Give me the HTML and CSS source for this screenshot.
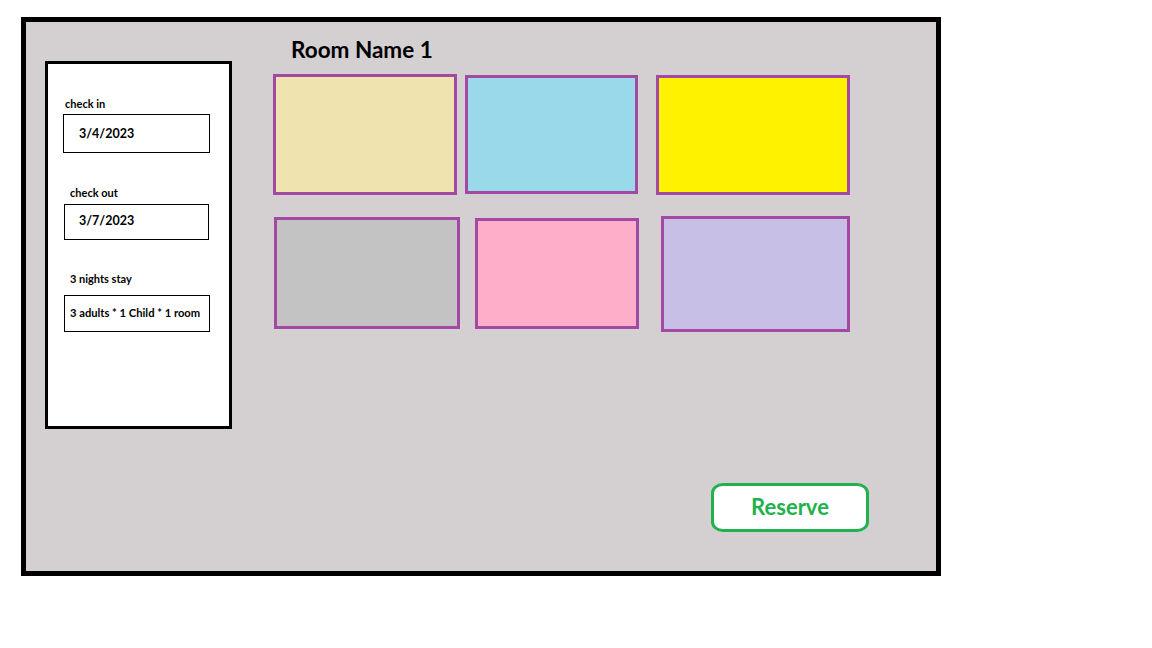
FILE: index.html
```html
<!DOCTYPE html>
<html>
<head>
<meta charset="utf-8">
<link rel="stylesheet" href="styles.css">
</head>
<body>
<div class="frame">
  <aside class="sidebar">
    <div class="label l-in">check in</div>
    <div class="field f-in">3/4/2023</div>
    <div class="label l-out">check out</div>
    <div class="field f-out">3/7/2023</div>
    <div class="label l-stay">3 nights stay</div>
    <div class="field f-guests">3 adults * 1 Child * 1 room</div>
  </aside>
  <main class="main">
    <h1 class="title">Room Name 1</h1>
    <div class="row row1">
      <div class="card c1"></div>
      <div class="card c2"></div>
      <div class="card c3"></div>
    </div>
    <div class="row row2">
      <div class="card c4"></div>
      <div class="card c5"></div>
      <div class="card c6"></div>
    </div>
    <button class="reserve">Reserve</button>
  </main>
</div>
</body>
</html>
```

FILE: styles.css
```css
html, body {
  margin: 0;
  padding: 0;
  background: #ffffff;
}
body {
  padding: 17px 0 0 21px;
  font-family: Lato, "Open Sans", "Liberation Sans", sans-serif;
  color: #000;
}
.frame {
  box-sizing: border-box;
  width: 920px;
  height: 559px;
  border: 5px solid #000;
  background: #d4cfd1;
  display: flex;
  align-items: flex-start;
}
.sidebar {
  box-sizing: border-box;
  width: 187px;
  height: 368px;
  margin: 39px 0 0 19px;
  border: 3px solid #000;
  background: #fff;
  display: flex;
  flex-direction: column;
  align-items: flex-start;
}
.label {
  font-size: 11px;
  line-height: 14px;
  font-weight: 700;
}
.l-in { margin: 33px 0 0 17px; }
.l-out { margin: 33px 0 0 22px; }
.l-stay { margin: 32px 0 0 22px; }
.field {
  box-sizing: border-box;
  border: 1px solid #000;
  display: flex;
  align-items: center;
  font-weight: 700;
  font-size: 12.5px;
}
.f-in { width: 147px; height: 39px; margin: 3px 0 0 15px; padding-left: 15px; }
.f-out { width: 145px; height: 36px; margin: 4px 0 0 16px; padding-left: 14px; padding-bottom: 3px; }
.f-guests { width: 146px; height: 37px; margin: 9px 0 0 16px; padding-left: 5px; font-size: 11.2px; padding-bottom: 2px; }

.main {
  margin: 16px 0 0 41px;
  display: flex;
  flex-direction: column;
  align-items: flex-start;
}
.title {
  margin: 0 0 0 18px;
  font-size: 22.5px;
  line-height: 24px;
  font-weight: 700;
}
.row {
  display: flex;
  align-items: flex-start;
}
.row1 { margin-top: 12px; }
.row2 { margin-top: 21px; }
.card {
  box-sizing: border-box;
  border: 3px solid #a349a4;
}
.c1 { width: 184px; height: 121px; background: #efe4b0; }
.c2 { width: 173px; height: 119px; margin: 1px 0 0 8px; background: #99d9ea; }
.c3 { width: 194px; height: 120px; margin: 1px 0 0 18px; background: #fff200; }
.c4 { width: 186px; height: 112px; margin: 1px 0 0 1px; background: #c3c3c3; }
.c5 { width: 164px; height: 111px; margin: 2px 0 0 15px; background: #ffaec9; }
.c6 { width: 189px; height: 116px; margin: 0 0 0 22px; background: #c8bfe7; }

.reserve {
  box-sizing: border-box;
  width: 158px;
  height: 49px;
  margin: 151px 0 0 438px;
  border: 3px solid #22b14c;
  border-radius: 12px / 10px;
  background: #fff;
  color: #22b14c;
  font-family: Lato, "Open Sans", "Liberation Sans", sans-serif;
  font-weight: 700;
  font-size: 22px;
  padding: 0 0 2px 0;
  cursor: pointer;
}
```
